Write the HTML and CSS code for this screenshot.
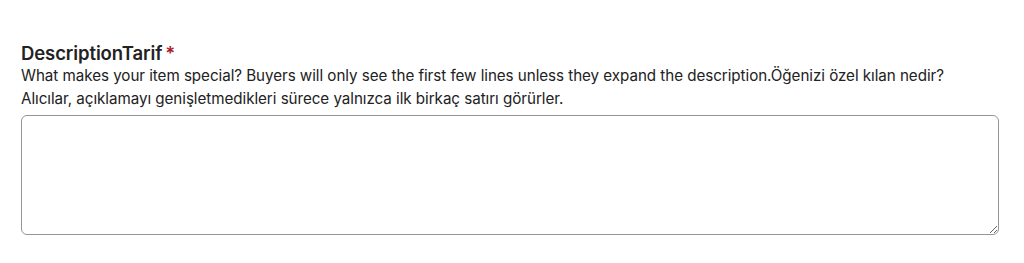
FILE: index.html
```html
<!DOCTYPE html>
<html lang="tr">
<head>
<meta charset="utf-8">
<link rel="stylesheet" href="styles.css">
</head>
<body>
<div class="field">
  <label class="label" for="desc">DescriptionTarif<span class="req">*</span></label>
  <p class="help">What makes your item special? Buyers will only see the first few lines unless they expand the description.Öğenizi özel kılan nedir?<br>Alıcılar, açıklamayı genişletmedikleri sürece yalnızca ilk birkaç satırı görürler.</p>
  <textarea id="desc" class="input"></textarea>
</div>
</body>
</html>
```
FILE: styles.css
```css
html, body { margin: 0; padding: 0; background: #fff; }
body { font-family: Inter, Roboto, "Liberation Sans", Arial, sans-serif; color: #222; }
.field { padding: 42px 25px 0 21px; display: flex; flex-direction: column; }
.label { font-size: 18.5px; font-weight: 600; line-height: 22px; color: #222; letter-spacing: -0.1px; }
.req { color: #a61a2e; margin-left: 3px; }
.help { margin: 0; font-size: 15.2px; line-height: 23px; color: #222; letter-spacing: -0.05px; }
.input { margin-top: 5px; width: 978px; height: 120px; box-sizing: border-box; border: 1px solid #959595; border-radius: 6px; font: inherit; resize: vertical; }
```
